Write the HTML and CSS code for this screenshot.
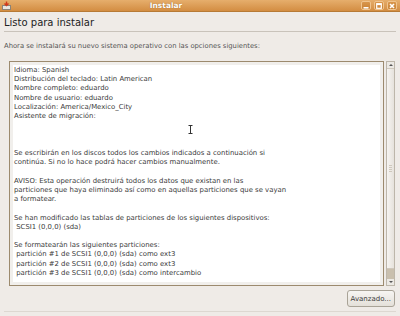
FILE: index.html
```html
<!DOCTYPE html>
<html lang="es">
  <head>
    <meta charset="UTF-8" />
    <title>Instalar</title>
    <link rel="stylesheet" href="styles.css">
  </head>
  <body>
    <div class="window">
      <div class="titlebar">
        <svg class="app-icon" width="9" height="9" viewBox="0 0 9 9">
          <rect x="0.5" y="4.5" width="8" height="4" fill="#e9e6e1" stroke="#8a8378" />
          <path d="M4.5 0.5 L4.5 4 M2.5 2.5 L4.5 4.5 L6.5 2.5" stroke="#d0391c" stroke-width="1.4" fill="none" />
        </svg>
        <span class="title">Instalar</span>
        <div class="win-buttons">
          <span class="win-btn">
            <svg width="6" height="6" viewBox="0 0 6 6"><rect x="0.5" y="4" width="5" height="1.6" fill="#fff" /></svg>
          </span>
          <span class="win-btn">
            <svg width="6" height="6" viewBox="0 0 6 6"><rect x="0.7" y="0.7" width="4.6" height="4.6" fill="none" stroke="#fff" stroke-width="1.2" /><rect x="0.7" y="0.7" width="4.6" height="1.4" fill="#fff" /></svg>
          </span>
          <span class="win-btn">
            <svg width="6" height="6" viewBox="0 0 6 6"><path d="M1 1 L5 5 M5 1 L1 5" stroke="#fff" stroke-width="1.6" /></svg>
          </span>
        </div>
      </div>

      <div class="page">
        <h1 class="page-title">Listo para instalar</h1>
        <p class="intro">Ahora se instalará su nuevo sistema operativo con las opciones siguientes:</p>

        <div class="summary-row">
          <div class="summary-box">
<pre class="summary">Idioma: Spanish
Distribución del teclado: Latin American
Nombre completo: eduardo
Nombre de usuario: eduardo
Localización: America/Mexico_City
Asistente de migración:



Se escribirán en los discos todos los cambios indicados a continuación si
continúa. Si no lo hace podrá hacer cambios manualmente.

AVISO: Esta operación destruirá todos los datos que existan en las
particiones que haya eliminado así como en aquellas particiones que se vayan
a formatear.

Se han modificado las tablas de particiones de los siguientes dispositivos:
 SCSI1 (0,0,0) (sda)

Se formatearán las siguientes particiones:
 partición #1 de SCSI1 (0,0,0) (sda) como ext3
 partición #2 de SCSI1 (0,0,0) (sda) como ext3
 partición #3 de SCSI1 (0,0,0) (sda) como intercambio</pre>
            <svg class="ibeam" width="5" height="9" viewBox="0 0 5 9">
              <path d="M0.5 0.5 H4.5 M2.5 0.5 V8.5 M0.5 8.5 H4.5" stroke="#333" stroke-width="1" fill="none" />
            </svg>
          </div>
          <div class="scrollbar">
            <span class="arrow arrow-up"></span>
            <span class="slider"><span class="grip"></span></span>
            <span class="trough"></span>
            <span class="arrow arrow-down"></span>
          </div>
        </div>

        <div class="actions">
          <button class="btn">Avanzado...</button>
        </div>
      </div>
    </div>
  </body>
</html>
```

FILE: styles.css
```css
html, body {
  margin: 0;
  padding: 0;
}
body {
  width: 400px;
  height: 316px;
  overflow: hidden;
  background: #efebe7;
  font-family: "DejaVu Sans", sans-serif;
  color: #3c3c3c;
}
.window {
  height: 316px;
  display: flex;
  flex-direction: column;
}
.titlebar {
  height: 11px;
  display: flex;
  align-items: center;
  background: linear-gradient(#e6ae6c, #d38d42);
  border-bottom: 1px solid #b77a36;
}
.app-icon {
  margin-left: 2px;
}
.title {
  flex: 1;
  text-align: center;
  color: #fff;
  font-weight: bold;
  font-size: 7.5px;
  text-shadow: 0 0 1px #8a5519;
  padding-right: 40px;
}
.win-buttons {
  display: flex;
  gap: 3px;
  margin-right: 3px;
}
.win-btn {
  width: 10px;
  height: 9px;
  box-sizing: border-box;
  border: 1px solid #f0c48e;
  border-radius: 2px;
  background: linear-gradient(#d9964c, #c98236);
  display: flex;
  align-items: center;
  justify-content: center;
}
.page {
  flex: 1;
  padding: 0 4px;
  display: flex;
  flex-direction: column;
}
.page-title {
  margin: 0;
  padding: 5px 0 3px;
  font-size: 10px;
  font-weight: normal;
  color: #222;
  border-bottom: 1px solid #c9c3bb;
}
.intro {
  margin: 10px 0 11px;
  font-size: 6.8px;
  color: #555;
}
.summary-row {
  display: flex;
  margin-left: 5px;
  gap: 2px;
  margin-right: 1px;
}
.summary-box {
  flex: 1;
  height: 225px;
  box-sizing: border-box;
  border: 1px solid #9c8a6e;
  background: #fff;
  box-shadow: inset 0 0 0 3px #f1efec;
  overflow: hidden;
  position: relative;
}
.summary {
  margin: 0;
  padding: 4px 4px;
  font-family: "DejaVu Sans", sans-serif;
  font-size: 6.9px;
  line-height: 9.22px;
  color: #3a3a3a;
}
.ibeam {
  position: absolute;
  left: 178px;
  top: 63px;
}
.scrollbar {
  width: 9px;
  height: 225px;
  display: flex;
  flex-direction: column;
  box-sizing: border-box;
  border: 1px solid #bdb6aa;
  background: #d8d2c8;
}
.arrow {
  height: 6px;
  background: #ece9e4;
  position: relative;
}
.arrow::after {
  content: "";
  position: absolute;
  left: 2px;
  border-left: 2px solid transparent;
  border-right: 2px solid transparent;
}
.arrow-up::after {
  top: 2px;
  border-bottom: 2px solid #555;
}
.arrow-down::after {
  top: 2px;
  border-top: 2px solid #555;
}
.slider {
  height: 199px;
  background: linear-gradient(90deg, #f6f4f1, #e6e2dc);
  border-top: 1px solid #cfc8bd;
  border-bottom: 1px solid #cfc8bd;
  display: flex;
  align-items: center;
  justify-content: center;
}
.grip {
  width: 3px;
  height: 7px;
  background: repeating-linear-gradient(#cfc8bd 0 1px, transparent 1px 2px);
}
.trough {
  flex: 1;
  background: #c9bfae;
}
.actions {
  display: flex;
  justify-content: flex-end;
  padding: 4px 1px 4px;
  border-bottom: 1px solid #ddd8d1;
}
.btn {
  height: 17px;
  padding: 0 3px;
  font-family: "DejaVu Sans", sans-serif;
  font-size: 7px;
  color: #3c3c3c;
  border: 1px solid #a9a397;
  border-radius: 3px;
  background: linear-gradient(#f7f5f2, #e4e0d9);
}
```
